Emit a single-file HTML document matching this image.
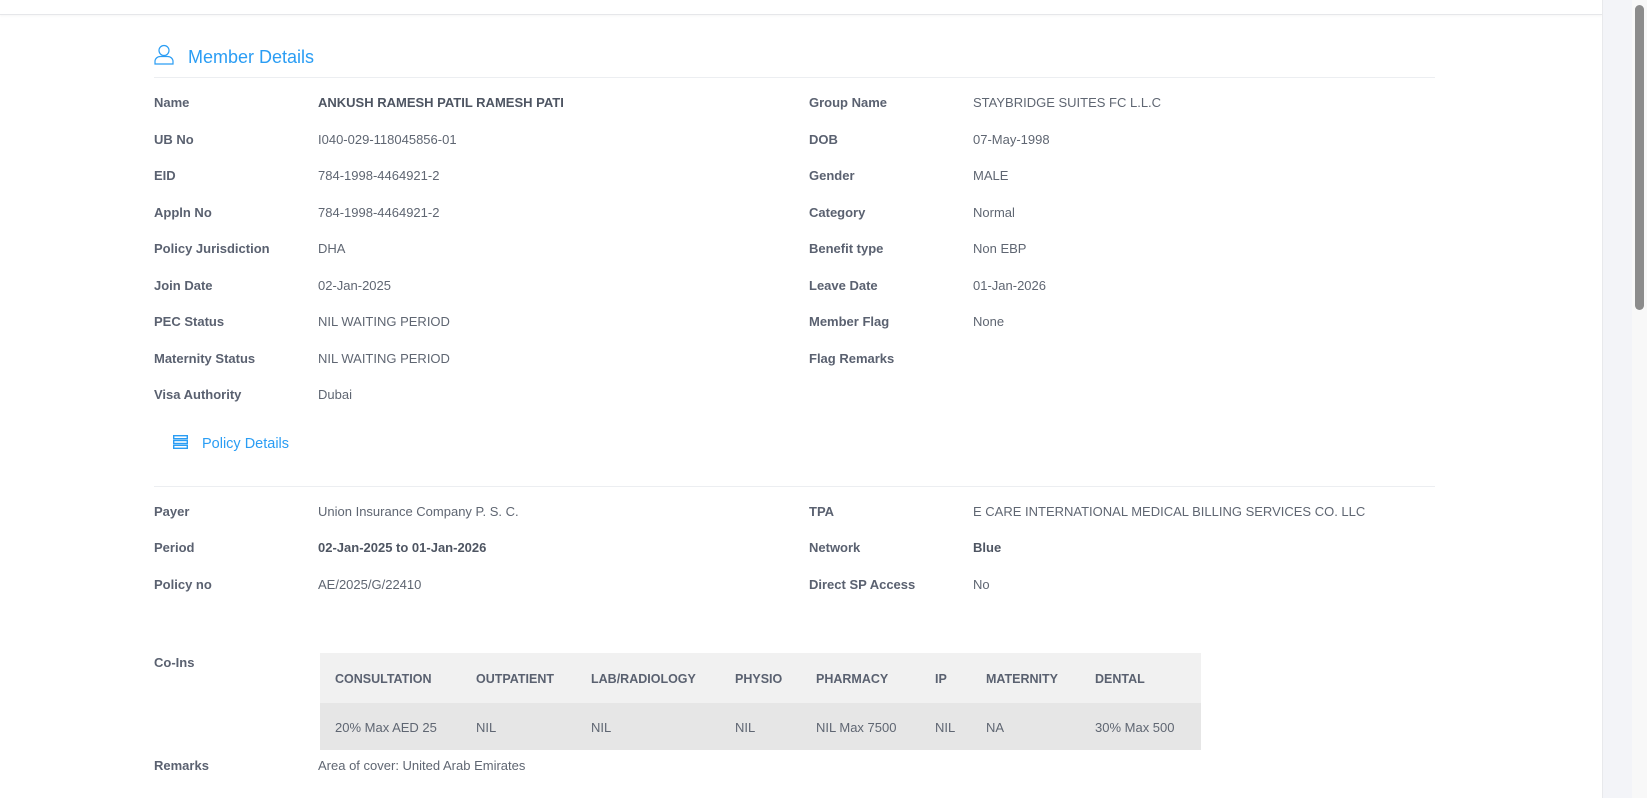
<!DOCTYPE html>
<html><head><meta charset="utf-8"><style>
*{margin:0;padding:0;box-sizing:border-box}
body{width:1647px;height:798px;overflow:hidden;background:#fff;font-family:"Liberation Sans",sans-serif;color:#5f6672;position:relative}
.t{position:absolute;font-size:13px;line-height:16px;white-space:nowrap;transform:translateY(-45%)}
.l{font-weight:bold;color:#5a6170}
.b{font-weight:bold;color:#4e5562}
.hr{position:absolute;left:154px;width:1281px;height:1px;background:#eceef1}
.blue{color:#2a9df4}
</style></head><body>
<div style="position:absolute;left:0;top:0;width:1602px;height:15px;border-bottom:1px solid #e6e7ea;box-shadow:0 1px 2px rgba(0,0,0,0.04)"></div>
<div style="position:absolute;left:1602px;top:0;width:30px;height:798px;background:#f3f4f8;border-left:1px solid #e8e9ec"></div>
<div style="position:absolute;left:1632px;top:0;width:15px;height:798px;background:#f8f8f8"></div>
<div style="position:absolute;left:1635px;top:5px;width:9px;height:305px;background:#8c8c8c;border-radius:5px"></div>

<svg style="position:absolute;left:154px;top:44px" width="20" height="21" viewBox="0 0 20 21" fill="none" stroke="#2a9df4" stroke-width="1.2"><circle cx="10" cy="6.5" r="5"/><path d="M1 20v-2.5c0-3 2.5-5 5.5-5h7c3 0 5.5 2 5.5 5V20z"/></svg>
<div class="t blue" style="left:188px;top:56px;font-size:18px;line-height:22px">Member Details</div>
<div class="hr" style="top:77px"></div>

<div class="t l" style="left:154px;top:102px">Name</div><div class="t b" style="left:318px;top:102px">ANKUSH RAMESH PATIL RAMESH PATI</div>
<div class="t l" style="left:809px;top:102px">Group Name</div><div class="t" style="left:973px;top:102px">STAYBRIDGE SUITES FC L.L.C</div>
<div class="t l" style="left:154px;top:139px">UB No</div><div class="t" style="left:318px;top:139px">I040-029-118045856-01</div>
<div class="t l" style="left:809px;top:139px">DOB</div><div class="t" style="left:973px;top:139px">07-May-1998</div>
<div class="t l" style="left:154px;top:175px">EID</div><div class="t" style="left:318px;top:175px">784-1998-4464921-2</div>
<div class="t l" style="left:809px;top:175px">Gender</div><div class="t" style="left:973px;top:175px">MALE</div>
<div class="t l" style="left:154px;top:212px">Appln No</div><div class="t" style="left:318px;top:212px">784-1998-4464921-2</div>
<div class="t l" style="left:809px;top:212px">Category</div><div class="t" style="left:973px;top:212px">Normal</div>
<div class="t l" style="left:154px;top:248px">Policy Jurisdiction</div><div class="t" style="left:318px;top:248px">DHA</div>
<div class="t l" style="left:809px;top:248px">Benefit type</div><div class="t" style="left:973px;top:248px">Non EBP</div>
<div class="t l" style="left:154px;top:285px">Join Date</div><div class="t" style="left:318px;top:285px">02-Jan-2025</div>
<div class="t l" style="left:809px;top:285px">Leave Date</div><div class="t" style="left:973px;top:285px">01-Jan-2026</div>
<div class="t l" style="left:154px;top:321px">PEC Status</div><div class="t" style="left:318px;top:321px">NIL WAITING PERIOD</div>
<div class="t l" style="left:809px;top:321px">Member Flag</div><div class="t" style="left:973px;top:321px">None</div>
<div class="t l" style="left:154px;top:358px">Maternity Status</div><div class="t" style="left:318px;top:358px">NIL WAITING PERIOD</div>
<div class="t l" style="left:809px;top:358px">Flag Remarks</div>
<div class="t l" style="left:154px;top:394px">Visa Authority</div><div class="t" style="left:318px;top:394px">Dubai</div>

<svg style="position:absolute;left:173px;top:435px" width="15" height="14" viewBox="0 0 15 14" fill="none" stroke="#2a9df4" stroke-width="1.4"><rect x="0.7" y="0.7" width="13.6" height="3"/><rect x="0.7" y="5.5" width="13.6" height="3"/><rect x="0.7" y="10.3" width="13.6" height="3"/></svg>
<div class="t blue" style="left:202px;top:443px;font-size:14.5px">Policy Details</div>
<div class="hr" style="top:486px"></div>

<div class="t l" style="left:154px;top:511px">Payer</div><div class="t" style="left:318px;top:511px">Union Insurance Company P. S. C.</div>
<div class="t l" style="left:809px;top:511px">TPA</div><div class="t" style="left:973px;top:511px">E CARE INTERNATIONAL MEDICAL BILLING SERVICES CO. LLC</div>
<div class="t l" style="left:154px;top:547px">Period</div><div class="t b" style="left:318px;top:547px">02-Jan-2025 to 01-Jan-2026</div>
<div class="t l" style="left:809px;top:547px">Network</div><div class="t b" style="left:973px;top:547px">Blue</div>
<div class="t l" style="left:154px;top:584px">Policy no</div><div class="t" style="left:318px;top:584px">AE/2025/G/22410</div>
<div class="t l" style="left:809px;top:584px">Direct SP Access</div><div class="t" style="left:973px;top:584px">No</div>

<div class="t l" style="left:154px;top:662px">Co-Ins</div>
<div style="position:absolute;left:320px;top:653px;width:881px;height:50px;background:#f1f1f1"></div>
<div style="position:absolute;left:320px;top:703px;width:881px;height:47px;background:#e6e6e6"></div>
<div class="t l" style="left:335px;top:678px;font-size:12.5px">CONSULTATION</div>
<div class="t l" style="left:476px;top:678px;font-size:12.5px">OUTPATIENT</div>
<div class="t l" style="left:591px;top:678px;font-size:12.5px">LAB/RADIOLOGY</div>
<div class="t l" style="left:735px;top:678px;font-size:12.5px">PHYSIO</div>
<div class="t l" style="left:816px;top:678px;font-size:12.5px">PHARMACY</div>
<div class="t l" style="left:935px;top:678px;font-size:12.5px">IP</div>
<div class="t l" style="left:986px;top:678px;font-size:12.5px">MATERNITY</div>
<div class="t l" style="left:1095px;top:678px;font-size:12.5px">DENTAL</div>
<div class="t" style="left:335px;top:727px">20% Max AED 25</div>
<div class="t" style="left:476px;top:727px">NIL</div>
<div class="t" style="left:591px;top:727px">NIL</div>
<div class="t" style="left:735px;top:727px">NIL</div>
<div class="t" style="left:816px;top:727px">NIL Max 7500</div>
<div class="t" style="left:935px;top:727px">NIL</div>
<div class="t" style="left:986px;top:727px">NA</div>
<div class="t" style="left:1095px;top:727px">30% Max 500</div>

<div class="t l" style="left:154px;top:765px">Remarks</div><div class="t" style="left:318px;top:765px">Area of cover: United Arab Emirates</div>
</body></html>
